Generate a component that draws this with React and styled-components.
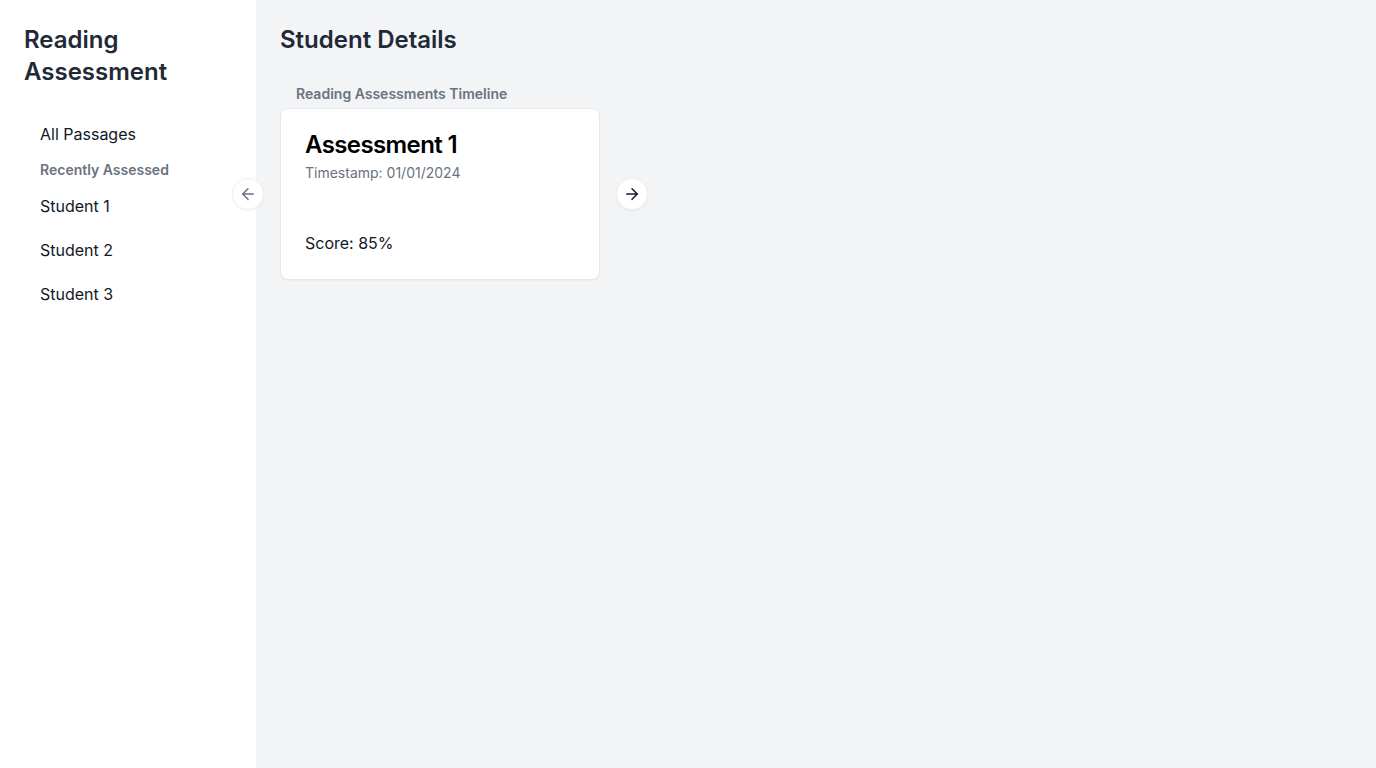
import React from "react";
import styled, { createGlobalStyle } from "styled-components";
import { ArrowLeft, ArrowRight } from "lucide-react";

const GlobalStyle = createGlobalStyle`
  html, body, #root {
    margin: 0;
    height: 100%;
  }
  body {
    font-family: Inter, "Noto Sans", sans-serif;
    color: #111827;
  }
  * {
    box-sizing: border-box;
  }
`;

const Layout = styled.div`
  display: flex;
  height: 100vh;
`;

const Sidebar = styled.aside`
  width: 256px;
  flex-shrink: 0;
  background: #ffffff;
  padding: 24px;
`;

const Brand = styled.h1`
  margin: 0 0 24px;
  font-size: 24px;
  line-height: 32px;
  font-weight: 600;
  color: #1f2937;
`;

const Nav = styled.nav`
  display: flex;
  flex-direction: column;
`;

const NavItem = styled.a`
  display: block;
  padding: 10px 16px;
  font-size: 16px;
  line-height: 24px;
  color: #111827;
  text-decoration: none;
  cursor: pointer;
`;

const NavHeading = styled.div`
  padding: 4px 16px;
  font-size: 14px;
  line-height: 20px;
  font-weight: 600;
  color: #6b7280;
`;

const Main = styled.main`
  flex: 1;
  background: #f3f4f6;
  padding: 24px;
`;

const PageTitle = styled.h2`
  margin: 0 0 28px;
  font-size: 24px;
  line-height: 32px;
  font-weight: 600;
  color: #1f2937;
`;

const SectionLabel = styled.div`
  padding-left: 16px;
  margin-bottom: 4px;
  font-size: 14px;
  line-height: 20px;
  font-weight: 600;
  color: #6b7280;
`;

const Carousel = styled.div`
  display: flex;
  align-items: center;
  gap: 16px;
`;

const RoundButton = styled.button`
  width: 32px;
  height: 32px;
  flex-shrink: 0;
  display: flex;
  align-items: center;
  justify-content: center;
  border-radius: 50%;
  border: 1px solid #eef0f2;
  background: #ffffff;
  box-shadow: 0 1px 2px rgba(0, 0, 0, 0.05);
  padding: 0;
  cursor: pointer;
  color: ${(p) => (p.$muted ? "#6b7280" : "#111827")};
  margin-left: ${(p) => (p.$pull ? "-48px" : "0")};
`;

const Card = styled.div`
  width: 320px;
  height: 172px;
  background: #ffffff;
  border: 1px solid #e5e7eb;
  border-radius: 8px;
  box-shadow: 0 1px 2px rgba(0, 0, 0, 0.04);
  padding: 20px 24px 24px;
  display: flex;
  flex-direction: column;
`;

const CardTitle = styled.h3`
  margin: 0;
  font-size: 24px;
  line-height: 32px;
  font-weight: 600;
  letter-spacing: -0.025em;
  color: #000000;
`;

const Stamp = styled.div`
  margin-top: 2px;
  font-size: 14px;
  line-height: 20px;
  color: #6b7280;
`;

const Score = styled.div`
  margin-top: auto;
  font-size: 16px;
  line-height: 24px;
  color: #111827;
`;

const students = ["Student 1", "Student 2", "Student 3"];

const App = () => {
  return (
    <>
      <GlobalStyle />
      <Layout>
        <Sidebar>
          <Brand>
            Reading
            <br />
            Assessment
          </Brand>
          <Nav>
            <NavItem>All Passages</NavItem>
            <NavHeading>Recently Assessed</NavHeading>
            {students.map((s) => (
              <NavItem key={s}>{s}</NavItem>
            ))}
          </Nav>
        </Sidebar>
        <Main>
          <PageTitle>Student Details</PageTitle>
          <SectionLabel>Reading Assessments Timeline</SectionLabel>
          <Carousel>
            <RoundButton $pull $muted aria-label="Previous">
              <ArrowLeft size={18} strokeWidth={2} />
            </RoundButton>
            <Card>
              <CardTitle>Assessment 1</CardTitle>
              <Stamp>Timestamp: 01/01/2024</Stamp>
              <Score>Score: 85%</Score>
            </Card>
            <RoundButton aria-label="Next">
              <ArrowRight size={18} strokeWidth={2} />
            </RoundButton>
          </Carousel>
        </Main>
      </Layout>
    </>
  );
};

export default App;
